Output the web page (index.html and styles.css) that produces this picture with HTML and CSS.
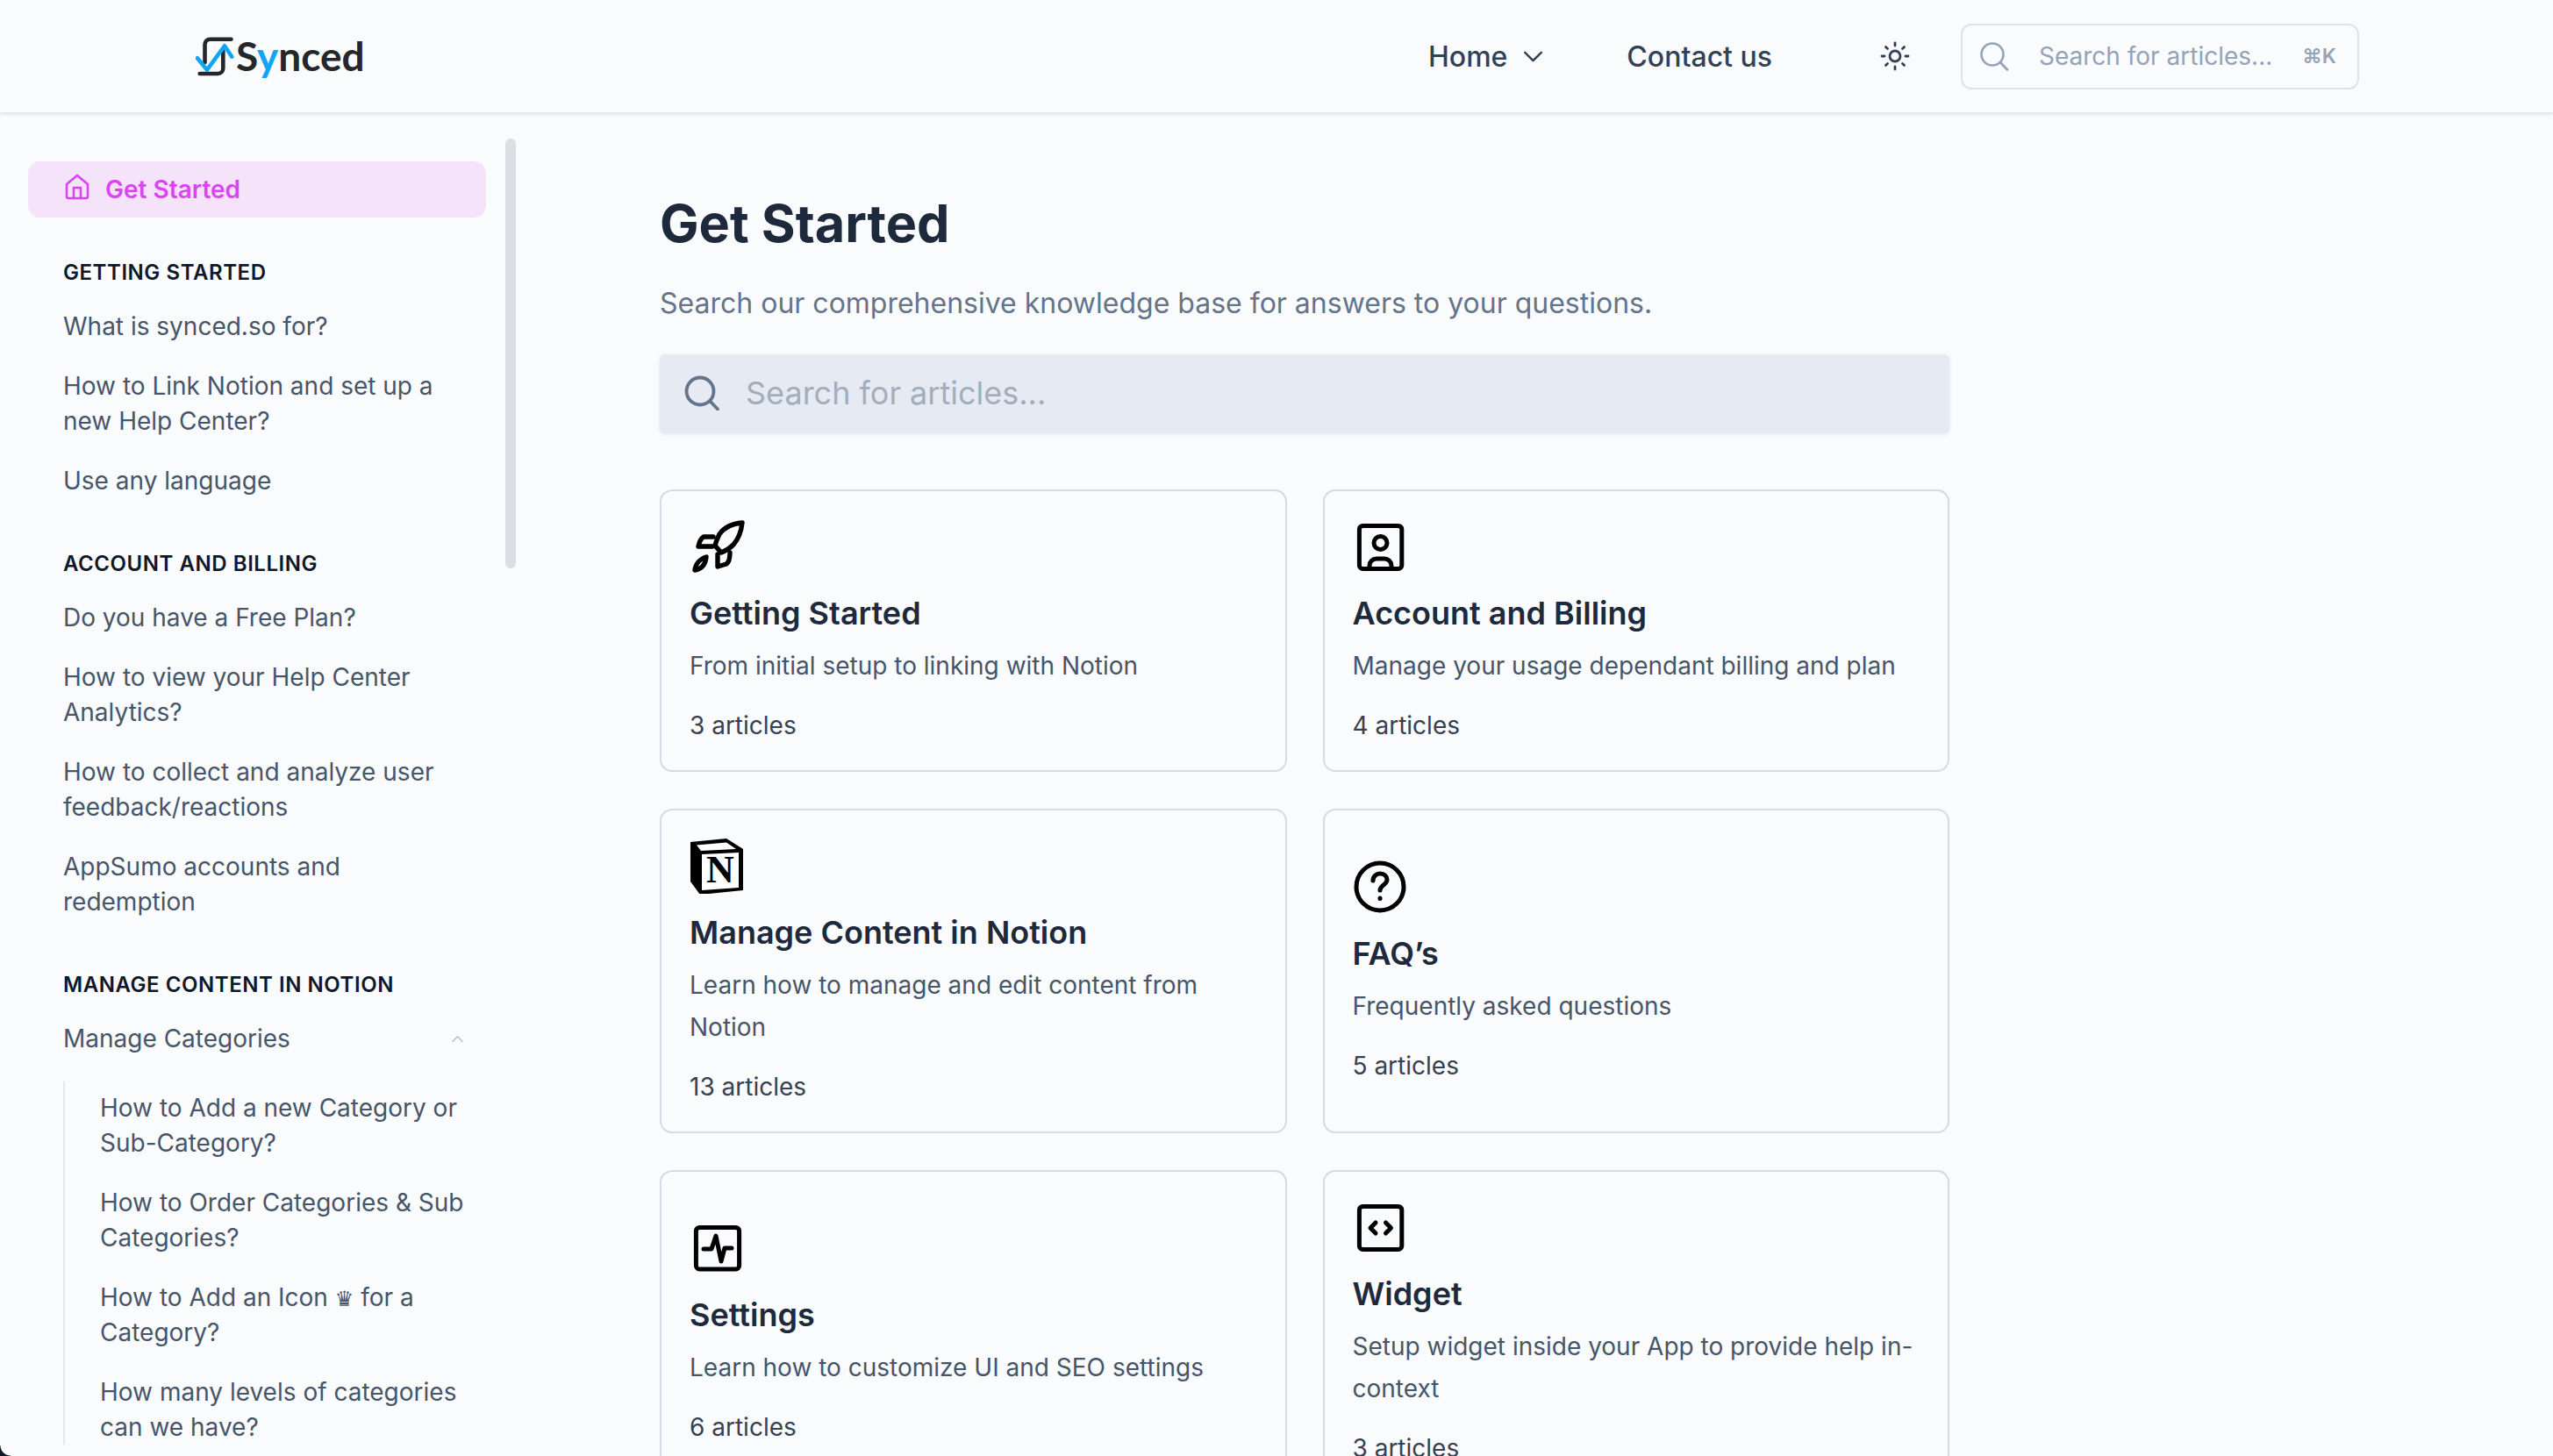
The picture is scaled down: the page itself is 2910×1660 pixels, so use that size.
FILE: index.html
```html
<!DOCTYPE html>
<html lang="en">
<head>
    <meta charset="UTF-8">
    <title>Get Started</title>
    <link rel="stylesheet" href="styles.css">
</head>
<body>
    <header class="topbar">
        <a class="logo" href="#">
            <svg class="logo-mark" viewBox="0 0 44 46" fill="none" stroke-width="4.6" stroke-linecap="round" stroke-linejoin="round">
                <path d="M40.5 3.7H16.5a6 6 0 0 0-6 6V30" stroke="#25272b"/>
                <path d="M4.7 43H25.3a6 6 0 0 0 6-6V17" stroke="#25272b"/>
                <path d="M2 25.3L13 38.7 33 11.3 41.3 23.7" stroke="#12a5f4"/>
            </svg>
            <span class="logo-text">S<span class="logo-y">y</span>nced</span>
        </a>
        <nav class="topnav">
            <a class="nav-link" href="#">Home
                <svg class="nav-chevron" viewBox="0 0 24 14" fill="none" stroke="#334155" stroke-width="2.6" stroke-linecap="round" stroke-linejoin="round"><path d="M2 2l10 10L22 2"/></svg>
            </a>
            <a class="nav-link contact" href="#">Contact us</a>
            <svg class="sun" viewBox="0 0 34 34" fill="none" stroke="#334155" stroke-width="2.8" stroke-linecap="round">
                <circle cx="17" cy="17" r="6"/>
                <path d="M17 2v3M17 29v3M2 17h3M29 17h3M6.400 6.400l2.100 2.100M25.500 25.500l2.100 2.100M6.400 27.600l2.100-2.100M25.500 8.500l2.100-2.100"/>
            </svg>
            <div class="top-search">
                <svg class="top-search-icon" viewBox="0 0 34 34" fill="none" stroke="#94a3b8" stroke-width="2.6" stroke-linecap="round"><circle cx="15" cy="15" r="12.500"/><path d="M24 24l8 8.500"/></svg>
                <span class="top-search-text">Search for articles...</span>
                <span class="top-search-key">⌘K</span>
            </div>
        </nav>
    </header>

    <div class="layout">
        <aside class="sidebar">
            <div class="scrollbar"></div>
            <a class="side-active" href="#">
                <svg class="side-home" viewBox="0 0 28 30" fill="none" stroke="#d946ef" stroke-width="2.6" stroke-linecap="round" stroke-linejoin="round"><path d="M2 12L14 2l12 10v14a2 2 0 0 1-2 2H4a2 2 0 0 1-2-2z"/><path d="M10 28V16h8v12"/></svg>
                Get Started
            </a>

            <div class="side-group">
                <h4 class="side-title">GETTING STARTED</h4>
                <a class="side-link" href="#">What is synced.so for?</a>
                <a class="side-link" href="#">How to Link Notion and set up a new Help Center?</a>
                <a class="side-link" href="#">Use any language</a>
            </div>

            <div class="side-group">
                <h4 class="side-title">ACCOUNT AND BILLING</h4>
                <a class="side-link" href="#">Do you have a Free Plan?</a>
                <a class="side-link" href="#">How to view your Help Center Analytics?</a>
                <a class="side-link" href="#">How to collect and analyze user feedback/reactions</a>
                <a class="side-link" href="#">AppSumo accounts and redemption</a>
            </div>

            <div class="side-group">
                <h4 class="side-title">MANAGE CONTENT IN NOTION</h4>
                <a class="side-link side-toggle" href="#">Manage Categories
                    <svg class="side-chevron" viewBox="0 0 16 10" fill="none" stroke="#b8bfca" stroke-width="1.800" stroke-linecap="round" stroke-linejoin="round"><path d="M2 8l6-6 6 6"/></svg>
                </a>
                <div class="side-sub">
                    <a class="side-link" href="#">How to Add a new Category or Sub-Category?</a>
                    <a class="side-link" href="#">How to Order Categories &amp; Sub Categories?</a>
                    <a class="side-link" href="#">How to Add an Icon <span class="crown">♛</span> for a Category?</a>
                    <a class="side-link" href="#">How many levels of categories can we have?</a>
                </div>
            </div>
        </aside>

        <main class="content">
            <h1 class="page-title">Get Started</h1>
            <p class="page-sub">Search our comprehensive knowledge base for answers to your questions.</p>
            <div class="big-search">
                <svg class="big-search-icon" viewBox="0 0 40 40" fill="none" stroke="#64748b" stroke-width="3.800" stroke-linecap="round"><circle cx="18" cy="18" r="15.500"/><path d="M29 29l9 9.500"/></svg>
                <span class="big-search-text">Search for articles...</span>
            </div>

            <div class="cards">
                <a class="card" href="#">
                    <svg class="card-icon" viewBox="0 0 64 64" fill="none" stroke="#000" stroke-width="5.400" stroke-linecap="round" stroke-linejoin="round">
                        <path d="M60 5C47 6 39 11 34 18c-2 4-4 9-5 13l7 8c5-2 10-5 14-9 6-7 9-16 10-25z"/>
                        <path d="M27 21H16c-3 2-5 6-6 11h16"/>
                        <path d="M46 39c0 6-1 11-4 13l-10 3V41"/>
                        <path d="M19 44c-7 2-12 8-13 15 7-1 12-6 13-15z"/>
                    </svg>
                    <h3 class="card-title">Getting Started</h3>
                    <p class="card-desc">From initial setup to linking with Notion</p>
                    <span class="card-count">3 articles</span>
                </a>
                <a class="card" href="#">
                    <svg class="card-icon" viewBox="0 0 64 64" fill="none" stroke="#000" stroke-width="5" stroke-linecap="round" stroke-linejoin="round">
                        <rect x="7.400" y="8.400" width="48.400" height="49" rx="4"/>
                        <circle cx="31.500" cy="28" r="7.500"/>
                        <path d="M19 57v-3a8 8 0 0 1 8-8h9a8 8 0 0 1 8 8v3"/>
                    </svg>
                    <h3 class="card-title">Account and Billing</h3>
                    <p class="card-desc">Manage your usage dependant billing and plan</p>
                    <span class="card-count">4 articles</span>
                </a>
                <a class="card" href="#">
                    <svg class="card-icon" viewBox="0 0 64 64">
                        <path d="M1 5L42 1 61 13V60L12 65 1 50Z" fill="#000"/>
                        <path d="M8 8.500L42 5.500 53 13 13 15Z" fill="#fff"/>
                        <path d="M14 19L56 17V57L14 60Z" fill="#fff"/>
                        <text x="35" y="51" class="notion-n">N</text>
                    </svg>
                    <h3 class="card-title">Manage Content in Notion</h3>
                    <p class="card-desc">Learn how to manage and edit content from Notion</p>
                    <span class="card-count">13 articles</span>
                </a>
                <a class="card" href="#">
                    <svg class="card-icon" viewBox="0 0 64 64" fill="none" stroke="#000" stroke-width="5" stroke-linecap="round" stroke-linejoin="round">
                        <circle cx="31" cy="32" r="27"/>
                        <path d="M23 25c0-5 4-8 8-8 5 0 8 3 8 7 0 6-8 6-8 12"/>
                        <path d="M31 45v.5"/>
                    </svg>
                    <h3 class="card-title">FAQ’s</h3>
                    <p class="card-desc">Frequently asked questions</p>
                    <span class="card-count">5 articles</span>
                </a>
                <a class="card" href="#">
                    <svg class="card-icon" viewBox="0 0 64 64" fill="none" stroke="#000" stroke-width="5" stroke-linecap="round" stroke-linejoin="round">
                        <rect x="7.400" y="8.400" width="49.200" height="47.500" rx="4"/>
                        <path d="M16 33h9l5-15 6 29 4-15h8"/>
                    </svg>
                    <h3 class="card-title">Settings</h3>
                    <p class="card-desc">Learn how to customize UI and SEO settings</p>
                    <span class="card-count">6 articles</span>
                </a>
                <a class="card" href="#">
                    <svg class="card-icon" viewBox="0 0 64 64" fill="none" stroke="#000" stroke-width="5" stroke-linecap="round" stroke-linejoin="round">
                        <rect x="7.400" y="8.400" width="48.400" height="49" rx="4"/>
                        <path d="M26 27l-6 6 6 6M37.500 27l6 6-6 6"/>
                    </svg>
                    <h3 class="card-title">Widget</h3>
                    <p class="card-desc">Setup widget inside your App to provide help in-context</p>
                    <span class="card-count">3 articles</span>
                </a>
            </div>
        </main>
    </div>
</body>
</html>
```

FILE: styles.css
```css
html, body {
    height: 100%;
    margin: 0;
    overflow: hidden;
}

body {
    background-color: #f9fbfd;
    font-family: Inter, "Noto Sans", sans-serif;
    color: #374151;
}

/* dark window corner at the bottom left of the shot */
body::after {
    content: "";
    position: fixed;
    left: 0;
    bottom: 0;
    width: 12px;
    height: 12px;
    background: radial-gradient(circle at 100% 0, transparent 11px, #0f172a 12px);
}

a {
    color: inherit;
    text-decoration: none;
}

.topbar {
    height: 128px;
    display: flex;
    align-items: center;
    justify-content: space-between;
    padding: 0 221px 0 223px;
    border-bottom: 1px solid #e4e7ec;
    box-shadow: 0 1px 4px rgba(15, 23, 42, 0.12);
}

.logo {
    display: flex;
    align-items: center;
    gap: 2px;
}

.logo-mark {
    width: 44px;
    height: 46px;
}

.logo-text {
    font-family: Lato, sans-serif;
    font-weight: 700;
    font-size: 46px;
    color: #25272b;
    line-height: 1;
}

.logo-y {
    color: #12a5f4;
}

.topnav {
    display: flex;
    align-items: center;
}

.nav-link {
    display: flex;
    align-items: center;
    gap: 18px;
    font-size: 32px;
    font-weight: 500;
    color: #334155;
}

.nav-chevron {
    width: 23px;
    height: 13px;
}

.contact {
    margin-left: 95px;
}

.sun {
    width: 34px;
    height: 34px;
    margin-left: 123px;
}

.top-search {
    width: 454px;
    height: 75px;
    box-sizing: border-box;
    margin-left: 58px;
    padding: 0 24px 0 19px;
    display: flex;
    align-items: center;
    border: 2px solid #dfe3e9;
    border-radius: 12px;
}

.top-search-icon {
    width: 34px;
    height: 34px;
}

.top-search-text {
    margin-left: 34px;
    font-size: 28px;
    color: #94a3b8;
    flex-grow: 1;
}

.top-search-key {
    font-size: 23px;
    font-weight: 600;
    color: #94a3b8;
}

.layout {
    display: flex;
}

.sidebar {
    position: relative;
    flex: 0 0 590px;
    box-sizing: border-box;
    padding: 55px 36px 0 32px;
    height: 1531px;
    overflow: hidden;
}

.scrollbar {
    position: absolute;
    top: 29px;
    left: 576px;
    width: 12px;
    height: 490px;
    border-radius: 6px;
    background-color: #dcdee3;
}

.side-active {
    display: flex;
    align-items: center;
    gap: 18px;
    height: 64px;
    padding-left: 42px;
    border-radius: 14px;
    background-color: #f5e3fa;
    color: #d946ef;
    font-size: 28px;
    font-weight: 600;
}

.side-home {
    width: 28px;
    height: 30px;
    margin-top: -6px;
}

.side-group {
    margin-top: 57px;
    padding: 0 19px 0 40px;
}

.side-active + .side-group {
    margin-top: 45px;
}

.side-title {
    margin: 0 0 23px;
    font-size: 24px;
    line-height: 36px;
    font-weight: 600;
    letter-spacing: 0.55px;
    color: #0f172a;
}

.side-link {
    display: block;
    font-size: 28px;
    line-height: 40px;
    margin-bottom: 28px;
    color: #475569;
}

.side-group .side-link:last-child {
    margin-bottom: 0;
}

.side-toggle {
    display: flex;
    align-items: center;
    justify-content: space-between;
    margin-bottom: 29px;
    padding-right: 6px;
}

.side-chevron {
    width: 15px;
    height: 9px;
}

.side-sub {
    padding: 10px 0 0 40px;
    border-left: 2px solid #e5e7eb;
}

.crown {
    font-family: "DejaVu Sans", sans-serif;
    font-size: 24px;
    line-height: 0;
}

.content {
    width: 1470px;
    margin-left: 162px;
    padding-top: 89px;
}

.page-title {
    margin: 0;
    font-size: 59.4px;
    line-height: 72px;
    font-weight: 700;
    color: #1e293b;
}

.page-sub {
    margin: 32px 0 34px;
    font-size: 32px;
    line-height: 48px;
    color: #64748b;
}

.big-search {
    height: 90px;
    box-sizing: border-box;
    display: flex;
    align-items: center;
    padding: 0 0 2px 28px;
    border-radius: 6px;
    background-color: #e5eaf3;
    box-shadow: 0 1px 4px rgba(15, 23, 42, 0.08);
}

.big-search-icon {
    width: 40px;
    height: 40px;
}

.big-search-text {
    margin-left: 30px;
    font-size: 36px;
    color: #a3aebd;
}

.cards {
    margin-top: 64px;
    display: grid;
    grid-template-columns: 1fr 1fr;
    gap: 42px 41px;
}

.card {
    box-sizing: border-box;
    display: flex;
    flex-direction: column;
    justify-content: center;
    padding: 31px 32px 29px;
    border: 2px solid #d5dbe4;
    border-radius: 14px;
}

.card-icon {
    width: 64px;
    height: 64px;
    flex-shrink: 0;
}

.notion-n {
    font-family: "Liberation Serif", serif;
    font-weight: 700;
    font-size: 44px;
    text-anchor: middle;
    fill: #000;
}

.card-title {
    margin: 20px 0 12px;
    font-size: 36px;
    line-height: 48px;
    font-weight: 600;
    color: #1e293b;
}

.card-desc {
    margin: 0 0 22px;
    font-size: 28px;
    line-height: 48px;
    color: #475569;
}

.card-count {
    font-size: 28px;
    line-height: 44px;
    color: #374151;
}
```
